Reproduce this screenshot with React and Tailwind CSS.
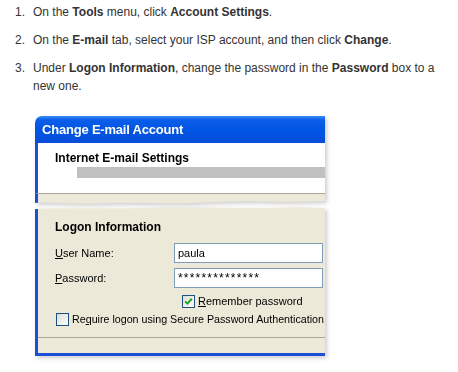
const Check = ({ checked }) => (
  <span className="flex h-[13px] w-[13px] shrink-0 items-center justify-center border border-[#1c5180] bg-[linear-gradient(135deg,#dcdcd7_0%,#ffffff_100%)]">
    {checked && (
      <svg width="9" height="9" viewBox="0 0 9 9">
        <path d="M1.2 4.4 L3.4 6.6 L7.8 1.8" fill="none" stroke="#21a121" strokeWidth="2" />
      </svg>
    )}
  </span>
);

const steps = [
  <>On the <b>Tools</b> menu, click <b>Account Settings</b>.</>,
  <>On the <b>E-mail</b> tab, select your ISP account, and then click <b>Change</b>.</>,
  <>Under <b>Logon Information</b>, change the password in the <b>Password</b> box to a new one.</>,
];

export default function App() {
  return (
    <div className="h-[372px] w-[458px] overflow-hidden bg-white font-['Liberation_Sans',Arial,sans-serif]">
      <ol className="pl-[15px] pt-[3px] text-[12px] leading-[18px] text-[#333]">
        {steps.map((s, i) => (
          <li key={i} className={`flex ${i ? 'mt-[10px]' : ''}`}>
            <span className="w-[18px] shrink-0">{i + 1}.</span>
            <span className="w-[412px]">{s}</span>
          </li>
        ))}
      </ol>

      <div className="ml-[35px] mt-[21px] w-[290px] text-[11px] text-black">
        {/* top fragment */}
        <div className="drop-shadow-[2px_2px_2px_rgba(0,0,0,0.2)]">
          <div className="h-[27px] rounded-tl-[7px] bg-[linear-gradient(180deg,#3d8ef7_0%,#0b5ee8_14%,#0054e3_55%,#0a4edb_100%)] pl-[7px] pt-[1px] text-[13px] font-bold leading-[26px] tracking-[-0.2px] text-white">
            Change E-mail Account
          </div>
          <div className="h-[50px] border-l-[3px] border-[#1a4fd6] bg-white pl-[17px] pt-[8px]">
            <div className="text-[12px] font-bold leading-[14px]">Internet E-mail Settings</div>
            <div className="ml-[22px] mt-[2px] h-[11px] bg-[#c0c0c0]" />
          </div>
          <div className="h-[6px] border-l-[3px] border-t border-[#1a4fd6] border-t-[#aca899] bg-[#ece9d8]" />
          <svg width="290" height="5" viewBox="0 0 290 5" className="block">
            <path d="M0 0 H290 V2 C250 4 215 1 180 3 C140 5.5 100 3 60 4.5 C30 5 12 3 0 4 Z" fill="#ece9d8" />
            <path d="M0 0 H3 V3.8 H0 Z" fill="#1a4fd6" />
          </svg>
        </div>

        {/* bottom fragment */}
        <div className="mt-[3px] drop-shadow-[2px_2px_2px_rgba(0,0,0,0.2)]">
          <svg width="290" height="5" viewBox="0 0 290 5" className="block">
            <path d="M0 2 C30 0.5 70 2.5 110 1 C160 -0.5 210 2 250 0.5 C270 0 282 1 290 1.5 V5 H0 Z" fill="#ece9d8" />
            <path d="M0 2 H3 V5 H0 Z" fill="#1a4fd6" />
          </svg>
          <div className="border-b-[3px] border-l-[3px] border-[#1a4fd6] bg-[#ece9d8] pl-[17px] pt-[8px]">
            <div className="text-[12px] font-bold leading-[14px]">Logon Information</div>
            <div className="mt-[9px] flex h-[20px] items-center">
              <span className="w-[119px]"><span className="underline">U</span>ser Name:</span>
              <div className="flex h-[20px] w-[149px] items-center border border-[#7f9db9] bg-white pl-[3px] text-[11px]">paula</div>
            </div>
            <div className="mt-[5px] flex h-[20px] items-center">
              <span className="w-[119px]"><span className="underline">P</span>assword:</span>
              <div className="flex h-[20px] w-[149px] items-center border border-[#7f9db9] bg-white pl-[3px] text-[12px] tracking-[1.2px]">**************</div>
            </div>
            <div className="ml-[127px] mt-[7px] flex h-[13px] items-center gap-[3px]">
              <Check checked />
              <span><span className="underline">R</span>emember password</span>
            </div>
            <div className="ml-[1px] mt-[5px] flex h-[13px] items-center gap-[3px] whitespace-nowrap text-[10.7px]">
              <Check />
              <span>Re<span className="underline">q</span>uire logon using Secure Password Authentication</span>
            </div>
            <div className="-ml-[17px] mt-[11px] h-[16px] border-t border-[#aca899]" />
          </div>
        </div>
      </div>
    </div>
  );
}
